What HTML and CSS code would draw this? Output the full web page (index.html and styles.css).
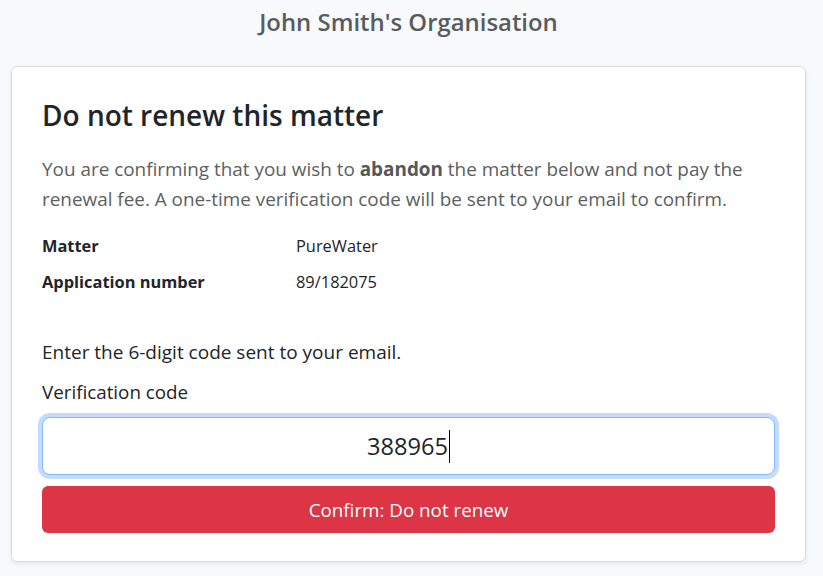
FILE: index.html
```html
<!DOCTYPE html>
<html lang="en">
<head>
<meta charset="utf-8">
<title>Do not renew this matter</title>
<link rel="stylesheet" href="styles.css">
</head>
<body>
<div class="page">
  <header class="org">John Smith's Organisation</header>
  <main class="card">
    <h2 class="card-title">Do not renew this matter</h2>
    <p class="lead">You are confirming that you wish to <strong>abandon</strong> the matter below and not pay the renewal fee. A one-time verification code will be sent to your email to confirm.</p>
    <dl class="details">
      <dt>Matter</dt><dd>PureWater</dd>
      <dt>Application number</dt><dd>89/182075</dd>
    </dl>
    <p class="hint">Enter the 6-digit code sent to your email.</p>
    <label class="field-label">Verification code</label>
    <div class="code-input"><span class="code-value">388965</span><span class="caret"></span></div>
    <button class="btn-danger" type="button">Confirm: Do not renew</button>
  </main>
</div>
</body>
</html>
```
FILE: styles.css
```css
* { box-sizing: border-box; }
html, body { margin: 0; padding: 0; }
body {
  background: #f8f9fa;
  font-family: "Open Sans", "Noto Sans", sans-serif;
  color: #212529;
  width: 823px;
  height: 576px;
  overflow: hidden;
}
.page {
  padding: 7px 17px 0 11px;
}
.org {
  text-align: center;
  font-size: 23.9px;
  line-height: 30px;
  font-weight: 600;
  color: #595c5f;
  margin-bottom: 29px;
}
.card {
  display: flex;
  flex-direction: column;
  background: #fff;
  border: 1px solid #d9dbde;
  border-radius: 6px;
  box-shadow: 0 2px 4px rgba(0, 0, 0, 0.075);
  padding: 31px 30px 28px;
}
.card-title {
  margin: 0;
  font-size: 28px;
  line-height: 35px;
  font-weight: 600;
  color: #212529;
}
.lead {
  margin: 21px 0 20px;
  font-size: 18.9px;
  line-height: 30px;
  font-weight: 400;
  color: #5c5f62;
}
.lead strong {
  font-weight: 700;
  color: #55585b;
}
.details {
  margin: 0;
  display: grid;
  grid-template-columns: 254px 1fr;
  row-gap: 12px;
  font-size: 16.4px;
  line-height: 24px;
}
.details dt {
  font-weight: 700;
  color: #212529;
}
.details dd {
  margin: 0;
  color: #212529;
}
.hint {
  margin: 44px 0 0;
  font-size: 19px;
  line-height: 28px;
}
.field-label {
  margin-top: 12px;
  font-size: 18.8px;
  line-height: 28px;
}
.code-input {
  margin-top: 11px;
  height: 58px;
  border: 1px solid #86b7fe;
  border-radius: 8px;
  box-shadow: 0 0 0 4px rgba(13, 110, 253, 0.25);
  display: flex;
  align-items: center;
  justify-content: center;
  font-size: 23.6px;
  color: #212529;
  background: #fff;
}
.code-value {
  line-height: 34px;
}
.caret {
  display: inline-block;
  width: 1px;
  height: 33px;
  background: #000;
  margin-left: 1px;
  margin-top: 1px;
}
.btn-danger {
  margin-top: 11px;
  height: 47px;
  border: 0;
  border-radius: 6px;
  background: #dc3545;
  color: #fff;
  font-family: inherit;
  font-size: 18.8px;
  line-height: 28px;
  display: flex;
  align-items: center;
  justify-content: center;
  padding: 0 16px;
}
```
